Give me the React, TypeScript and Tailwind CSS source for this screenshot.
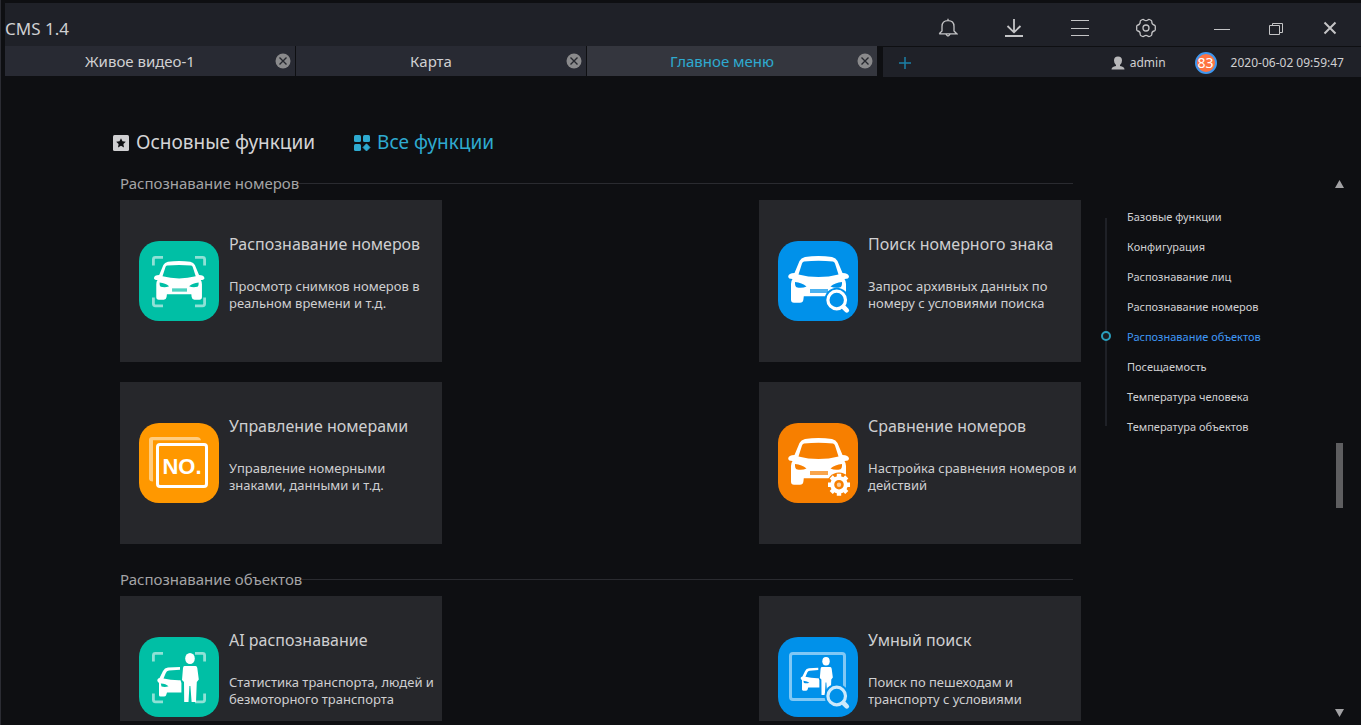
import type { ReactNode } from "react";

type IconKind = "plate" | "plateSearch" | "plateManage" | "plateCompare" | "ai" | "smartSearch";

type Card = { icon: IconKind; title: string; text: string };

const sections: { title: string; cards: Card[] }[] = [
  {
    title: "Распознавание номеров",
    cards: [
      { icon: "plate", title: "Распознавание номеров", text: "Просмотр снимков номеров в реальном времени и т.д." },
      { icon: "plateSearch", title: "Поиск номерного знака", text: "Запрос архивных данных по номеру с условиями поиска" },
      { icon: "plateManage", title: "Управление номерами", text: "Управление номерными знаками, данными и т.д." },
      { icon: "plateCompare", title: "Сравнение номеров", text: "Настройка сравнения номеров и действий" },
    ],
  },
  {
    title: "Распознавание объектов",
    cards: [
      { icon: "ai", title: "AI распознавание", text: "Статистика транспорта, людей и безмоторного транспорта" },
      { icon: "smartSearch", title: "Умный поиск", text: "Поиск по пешеходам и транспорту с условиями" },
    ],
  },
];

const navItems = [
  "Базовые функции",
  "Конфигурация",
  "Распознавание лиц",
  "Распознавание номеров",
  "Распознавание объектов",
  "Посещаемость",
  "Температура человека",
  "Температура объектов",
];

const tileColors: Record<IconKind, string> = {
  plate: "#00bfa5",
  plateSearch: "#0091ea",
  plateManage: "#ff9800",
  plateCompare: "#f77f00",
  ai: "#00bfa5",
  smartSearch: "#0091ea",
};

function Car({ color }: { color: string }) {
  return (
    <>
      <path
        fill="#fff"
        fillRule="evenodd"
        d="M16.5 32 L21.5 20 Q23 16.8 27 16 Q40.5 14 54 16 Q58 16.8 59.500 20 L64.500 32 Q70.500 32.200 71 35.500 Q71 38 66.500 38 Q68 40 68 43 V58.500 Q68 61.700 65 61.700 H59 Q56 61.700 55.600 58.500 L55.200 55.200 H25.800 L25.400 58.500 Q25 61.700 22 61.700 H16 Q13 61.700 13 58.500 V43 Q13 40 14.500 38 Q10.200 38 10.200 35.500 Q10.500 32.200 16.500 32 Z M26 20.500 Q24.500 20.800 24 22.500 L20.500 33.500 Q30 36 40.500 36 Q51 36 60.500 33.500 L57 22.500 Q56.500 20.800 55 20.500 Q40.500 19 26 20.500 Z"
      />
      <path fill={color} d="M17 41 Q24 41.500 28.500 45.500 Q24 47.500 18.500 46.200 Q16.800 45.500 17 41 Z M64 41 Q57 41.500 52.500 45.500 Q57 47.500 62.500 46.200 Q64.200 45.500 64 41 Z" />
      <rect x="32" y="48" width="18" height="4" fill={color} opacity="0.7" />
    </>
  );
}

function PersonAndCar({ color }: { color: string }) {
  return (
    <>
      <g fill="#fff">
        <ellipse cx="51" cy="21.500" rx="4.800" ry="5.500" />
        <path d="M45.500 29 H56.500 Q58 29 58.300 31 L59.800 42.500 L57.800 45 L57 65 H52.600 L51.400 49 L50.400 49 L49.500 65 H45.200 L45 45 L43 43 L44 31 Q44.200 29 45.500 29 Z" />
        <path d="M20.500 41 L24 34 Q25.500 31 29 30.600 L41 30 V32.800 L30 33.600 Q27.600 34 26.800 36 L24.500 41.500 Q32 43.500 41.500 43.300 L42.400 46 V55.500 H28 L27 58.500 Q26.500 59.500 25 59.500 H21.500 Q20 59.500 20 58 V46 L18.600 44.500 Q17.500 42 20.500 41 Z" />
      </g>
      <path fill={color} d="M21.800 46.500 Q27 46.800 29.500 49.300 Q26 50.500 22.500 49.500 Z" />
    </>
  );
}

function Corners() {
  return (
    <path
      fill="none"
      stroke="#8fe1d6"
      strokeWidth="2.800"
      d="M14.400 24.500 V18.400 Q14.400 16.400 16.400 16.400 H24 M56 16.400 H63.600 Q65.600 16.400 65.600 18.400 V24.500 M65.600 56.500 V62.800 Q65.600 64.800 63.600 64.800 H56 M24 64.800 H16.400 Q14.400 64.800 14.400 62.800 V56.500"
    />
  );
}

function Magnifier({ color, tile }: { color: string; tile: string }) {
  return (
    <>
      <circle cx="58.700" cy="59" r="12.200" fill={tile} />
      <path d="M64 64.500 L69.300 69.700" stroke={tile} strokeWidth="7" strokeLinecap="round" />
      <circle cx="58.700" cy="59" r="8.800" fill="none" stroke={color} strokeWidth="3.200" />
      <path d="M65.500 66 L68.800 69.300" stroke={color} strokeWidth="4.600" strokeLinecap="round" />
    </>
  );
}

function TileIcon({ kind }: { kind: IconKind }) {
  const color = tileColors[kind];
  return (
    <svg viewBox="0 0 80 80" className="size-20 shrink-0" aria-hidden="true">
      <rect width="80" height="80" rx="20" fill={color} />
      {kind === "plate" && (
        <>
          <Corners />
          <g transform="translate(6.500 7.500) scale(0.830)">
            <Car color={color} />
          </g>
        </>
      )}
      {kind === "plateSearch" && (
        <>
          <Car color={color} />
          <Magnifier color="#fff" tile={color} />
        </>
      )}
      {kind === "plateManage" && (
        <>
          <path fill="#ffcc80" d="M13 14 H58 Q61 14 62 17.300 H14 V58.500 Q10 58.500 10 55.500 V17 Q10 14 13 14 Z" />
          <rect x="18.500" y="21.500" width="49" height="42" rx="2.500" fill="none" stroke="#fff" strokeWidth="3" />
          <text x="43" y="51" textAnchor="middle" fontFamily="Liberation Sans, sans-serif" fontWeight="700" fontSize="22" fill="#fff">
            NO.
          </text>
        </>
      )}
      {kind === "plateCompare" && (
        <>
          <Car color={color} />
          <circle cx="61" cy="61.700" r="12.200" fill={color} />
          <circle cx="61" cy="61.700" r="6.800" fill="none" stroke="#fff" strokeWidth="4" />
          <g stroke="#fff" strokeWidth="4.400">
            {[0, 45, 90, 135].map((a) => (
              <path key={a} d="M61 50.700 V54.500 M61 68.900 V72.700" transform={`rotate(${a} 61 61.700)`} />
            ))}
          </g>
          <circle cx="61" cy="61.700" r="2.200" fill="#fff" fillOpacity="0.600" />
        </>
      )}
      {kind === "ai" && (
        <>
          <Corners />
          <PersonAndCar color={color} />
        </>
      )}
      {kind === "smartSearch" && (
        <>
          <rect x="12.500" y="16.500" width="54" height="46" rx="2.500" fill="none" stroke="#80c8f5" strokeWidth="3" />
          <g transform="translate(8.500 7.600) scale(0.775)">
            <PersonAndCar color={color} />
          </g>
          <Magnifier color="#cce9fb" tile={color} />
        </>
      )}
    </svg>
  );
}

function IconButton({ label, children }: { label: string; children: ReactNode }) {
  return (
    <button type="button" aria-label={label} className="flex size-5 items-center justify-center text-[#c4c4c6]">
      <svg viewBox="0 0 20 20" className="size-5" fill="none" stroke="currentColor" strokeWidth="1.300">
        {children}
      </svg>
    </button>
  );
}

function TitleBar() {
  return (
    <header className="mt-[3px] flex h-[43px] items-center justify-between bg-[#1f2128] pt-2 pr-[21px]">
      <h1 className="text-[17px] text-[#d0d0d2]">CMS 1.4</h1>
      <div className="flex items-center gap-[46px] pb-[2px]">
        <IconButton label="Уведомления">
          <path d="M10 0.800 V2.500 M1.200 15.800 H18.800 L16 13 V8.500 Q16 2.600 10 2.600 Q4 2.600 4 8.500 V13 L1.200 15.800 M8 16.200 Q10 19.800 12 16.200" />
        </IconButton>
        <IconButton label="Загрузки">
          <path strokeWidth="1.800" d="M10 1 V14 M3.500 8 L10 14.300 L16.500 8 M1 18 H19" />
        </IconButton>
        <IconButton label="Список">
          <path d="M1 2.500 H19 M1 10.500 H19 M1 17.500 H19" strokeWidth="1" />
        </IconButton>
        <IconButton label="Настройки">
          <path d="M6.500 1.500 Q7.500 1.200 8.200 2 Q10 3.300 11.800 2 Q12.500 1.200 13.500 1.500 L15.300 2.500 Q16 3 15.800 4 Q15.800 6.400 18 7 Q19.200 7.300 19.300 8.300 V11.700 Q19.200 12.700 18 13 Q15.800 13.600 15.800 16 Q16 17 15.300 17.500 L13.500 18.500 Q12.500 18.800 11.800 18 Q10 16.700 8.200 18 Q7.500 18.800 6.500 18.500 L4.700 17.500 Q4 17 4.200 16 Q4.200 13.600 2 13 Q0.800 12.700 0.700 11.700 V8.300 Q0.800 7.300 2 7 Q4.200 6.400 4.200 4 Q4 3 4.700 2.500 Z" />
          <circle cx="10" cy="10" r="3" />
        </IconButton>
        <div className="ml-[10px] flex gap-[34px]">
          <IconButton label="Свернуть">
            <path d="M2 11.500 H18" strokeWidth="1" />
          </IconButton>
          <IconButton label="Восстановить">
            <path d="M3.500 7.500 H13.500 V16.500 H3.500 Z M6.500 7.500 V5.500 H16.500 V14.500 H13.500" strokeWidth="1" />
          </IconButton>
          <IconButton label="Закрыть">
            <path d="M4.500 4.500 L15.500 15.500 M15.500 4.500 L4.500 15.500" strokeWidth="2" />
          </IconButton>
        </div>
      </div>
    </header>
  );
}

function Tab({ title, active }: { title: string; active?: boolean }) {
  return (
    <div
      className={
        active
          ? "flex w-[290px] items-center bg-[#34363e] pr-1 text-[#2eaad0]"
          : "flex w-[290px] items-center bg-[#282a33] pr-1 text-[#d0d0d2]"
      }
    >
      <button type="button" className="flex-1 text-[15px]">
        {title}
      </button>
      <button type="button" aria-label={`Закрыть: ${title}`}>
        <svg viewBox="0 0 16 16" className="size-4">
          <circle cx="8" cy="8" r="7.500" fill="#8a8a8c" />
          <path d="M4.500 4.500 L11.500 11.500 M11.500 4.500 L4.500 11.500" stroke="#26282f" strokeWidth="1.400" />
        </svg>
      </button>
    </div>
  );
}

function TabBar() {
  return (
    <div className="flex h-[31px]">
      <div className="mb-px flex gap-px">
        <Tab title="Живое видео-1" />
        <Tab title="Карта" />
        <Tab title="Главное меню" active />
      </div>
      <div className="mt-px ml-[6px] flex flex-1 items-center bg-[#1f2128] pt-[2px] pr-[17px] pl-4 text-xs text-[#d0d0d2]">
        <button type="button" aria-label="Добавить вкладку" className="mr-auto">
          <svg viewBox="0 0 12 12" className="size-3" stroke="#1c80a6" strokeWidth="1.500">
            <path d="M6 0 V12 M0 6 H12" />
          </svg>
        </button>
        <svg viewBox="0 0 14 14" className="mr-[5px] size-[14px]" fill="#b8b8ba" aria-hidden="true">
          <path d="M7 0.500 Q11 0.500 11 4.500 Q11 7.500 9 9 V10 Q13.500 10.800 13.500 13.500 H0.500 Q0.500 10.800 5 10 V9 Q3 7.500 3 4.500 Q3 0.500 7 0.500 Z" />
        </svg>
        <span>admin</span>
        <span className="mr-[14px] ml-[29px] flex size-[22px] items-center justify-center rounded-full border-2 border-[#3f97ee] bg-[#ff7442] text-sm text-white">
          83
        </span>
        <time>2020-06-02 09:59:47</time>
      </div>
    </div>
  );
}

function Modes() {
  return (
    <div className="flex h-[93px] shrink-0 items-center pt-[38px] pl-[112px] text-[19px] text-[#d4d4d6]">
      <button type="button" className="flex items-center gap-[7px]">
        <svg viewBox="0 0 16 16" className="size-4" aria-hidden="true">
          <rect width="16" height="16" rx="1.500" fill="#cfcfd1" />
          <path fill="#0e0f12" d="M8 3.200 L9.500 6.300 L12.800 6.700 L10.400 9 L11 12.400 L8 10.800 L5 12.400 L5.600 9 L3.200 6.700 L6.500 6.300 Z" />
        </svg>
        Основные функции
      </button>
      <button type="button" className="ml-[39px] flex items-center gap-[7px] text-[#2eaad0]">
        <svg viewBox="0 0 16 16" className="size-4 overflow-visible" fill="currentColor" aria-hidden="true">
          <rect width="7" height="7" rx="1.500" />
          <rect x="9" width="7" height="7" rx="1.500" />
          <rect y="9" width="7" height="7" rx="1.500" />
          <path d="M12.500 8.800 L16 12.500 L12.500 16 L9 12.500 Z" stroke="currentColor" strokeLinejoin="round" strokeWidth="0.800" />
        </svg>
        Все функции
      </button>
    </div>
  );
}

function FeatureCard({ card }: { card: Card }) {
  return (
    <a href="#" className="flex h-[162px] gap-[10px] bg-[#26272b] pl-[19px]">
      <div className="pt-[41px]">
        <TileIcon kind={card.icon} />
      </div>
      <div className="min-w-0 pt-8 text-[#cfcfd1]">
        <h3 className="text-base leading-6 whitespace-nowrap">{card.title}</h3>
        <p className="mt-[22px] w-[212px] text-[13px] leading-[17px]">{card.text}</p>
      </div>
    </a>
  );
}

function SideNav() {
  return (
    <nav className="relative ml-[25px] pt-8">
      <div className="absolute top-12 left-[-1px] h-[208px] w-[2px] bg-[#1f2127]" />
      <ul>
        {navItems.map((item) => {
          const active = item === "Распознавание объектов";
          return (
            <li key={item} className="relative flex h-[30px] items-center pl-[21px] text-[11px]">
              {active && <span className="absolute top-[9px] left-[-5px] size-[10px] rounded-full border-2 border-[#2a9fbe] bg-[#1a1c21]" />}
              <a href="#" className={active ? "text-[#3f97f5]" : "text-[#d0d0d2]"}>
                {item}
              </a>
            </li>
          );
        })}
      </ul>
    </nav>
  );
}

function ScrollTrack() {
  return (
    <div className="mr-[17px] ml-auto flex w-[9px] flex-col items-center pt-[10px] pb-1" aria-hidden="true">
      <svg viewBox="0 0 9 8" className="h-2 w-[9px]" fill="#a2a2a4">
        <path d="M4.500 0 L9 8 H0 Z" />
      </svg>
      <div className="flex w-[7px] flex-1 flex-col">
        <div className="grow-[255]" />
        <div className="h-[65px] bg-[#5e5e60]" />
        <div className="grow-[201]" />
      </div>
      <svg viewBox="0 0 9 8" className="h-2 w-[9px]" fill="#a2a2a4">
        <path d="M0 0 H9 L4.500 8 Z" />
      </svg>
    </div>
  );
}

export default function App() {
  return (
    <div className="flex h-screen flex-col overflow-hidden border-l border-[#2b2c33] bg-[#0e0f12] font-['Noto_Sans','Open_Sans',sans-serif]">
      <div className="ml-1 shrink-0">
        <TitleBar />
        <TabBar />
      </div>
      <Modes />
      <div className="mb-1 flex min-h-0 flex-1">
        <main className="ml-[119px] flex-1 overflow-hidden">
          {sections.map((section) => (
            <section key={section.title} className="mb-[22px]">
              <div className="mb-[3px] flex h-[27px] items-center pr-2">
                <h2 className="text-[15px] text-[#a4a4a6]">{section.title}</h2>
                <div className="h-px flex-1 bg-[#2a2b30]" />
              </div>
              <div className="grid grid-cols-[322px_322px] justify-between gap-y-5">
                {section.cards.map((card) => (
                  <FeatureCard key={card.title} card={card} />
                ))}
              </div>
            </section>
          ))}
        </main>
        <aside className="flex w-[280px]">
          <SideNav />
          <ScrollTrack />
        </aside>
      </div>
    </div>
  );
}
